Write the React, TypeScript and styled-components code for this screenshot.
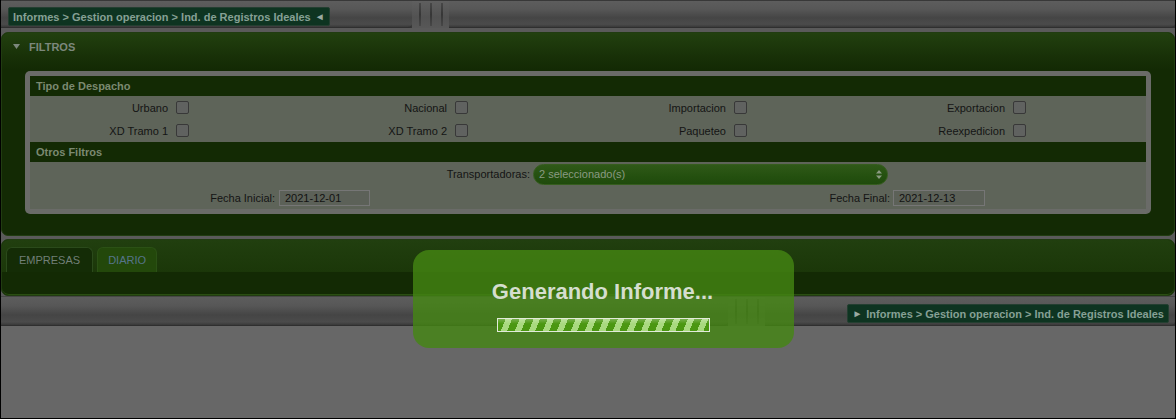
import React from "react";
import styled, { createGlobalStyle } from "styled-components";

const GlobalStyle = createGlobalStyle`
  html, body { margin: 0; padding: 0; }
  body {
    font-family: "Liberation Sans", Arial, sans-serif;
    background: #676767;
  }
  * { box-sizing: border-box; }
`;

const Page = styled.div`
  position: relative;
  height: 419px;
  border: 1px solid #000;
  border-top: none;
  background: #676767;
  overflow: hidden;
`;

/* splitter bars (top and bottom) */
const SplitBar = styled.div<{ $bottom?: boolean }>`
  display: flex;
  height: ${(p) => (p.$bottom ? 30 : 28)}px;
  border-top: 1px solid ${(p) => (p.$bottom ? "#474747" : "#383838")};
  background: linear-gradient(#5d5d5d 0%, #575757 30%, #454545 62%, #4b4b4b 86%, #333 100%);
`;

const Segment = styled.div<{ $width?: number; $align?: "start" | "end" }>`
  display: flex;
  align-items: ${(p) => (p.$align === "end" ? "flex-end" : "flex-start")};
  justify-content: ${(p) => (p.$align === "end" ? "flex-end" : "flex-start")};
  ${(p) => (p.$width ? `width: ${p.$width}px;` : "flex: 1;")}
  padding: ${(p) => (p.$align === "end" ? "0 6px 2px 0" : "6px 0 0 7px")};
  border-radius: 0 4px 4px 0;
  border-bottom: 1px solid #2f2f2f;
`;

const Grip = styled.div`
  display: flex;
  justify-content: center;
  gap: 9px;
  width: 37px;
  padding: 2px 4px;
  background: linear-gradient(#5f5f5f, #525252 60%, #575757);
`;

const GripLine = styled.span`
  width: 2px;
  height: 100%;
  background: linear-gradient(#474747, #363636 50%, #474747);
`;

const Crumb = styled.div`
  display: flex;
  align-items: center;
  gap: 4px;
  height: 19px;
  padding: 0 4px;
  background: #0e3421;
  border: 1px solid #243f31;
  border-radius: 2px;
  color: #86a095;
  font-size: 11px;
  font-weight: bold;
  white-space: nowrap;
`;

const CrumbArrow = styled.span`
  color: #9aaaa2;
  font-size: 10px;
  font-weight: normal;
`;

/* area between the two bars */
const Body = styled.div`
  display: flex;
  flex-direction: column;
  gap: 3px;
  padding-top: 4px;
  background: #5a5a5a;
`;

const Panel = styled.section`
  background: #132a04;
  border: 1px solid #213c11;
  border-radius: 7px;
  overflow: hidden;
`;

const PanelHeader = styled.div`
  display: flex;
  align-items: center;
  gap: 9px;
  height: 37px;
  padding: 0 0 10px 11px;
  background: linear-gradient(#22400f, #172f07 70%, #132a04);
  color: #7c887c;
  font-size: 11px;
  font-weight: bold;
`;

const Frame = styled.div`
  margin: 1px 23px 21px 23px;
  padding: 5px;
  background: #6a6b68;
  border-radius: 5px;
`;

const SectionTitle = styled.div`
  height: 20px;
  padding: 0 6px;
  line-height: 20px;
  background: #132a04;
  color: #7b8971;
  font-size: 11px;
  font-weight: bold;
`;

const Grid = styled.div<{ $cols: string; $h: number }>`
  display: grid;
  grid-template-columns: ${(p) => p.$cols};
  align-items: center;
  height: ${(p) => p.$h}px;
  background: #5e6459;
  color: #141414;
  font-size: 11px;
`;

const CheckCell = styled.label`
  display: grid;
  grid-template-columns: 138px 13px;
  column-gap: 8px;
  align-items: center;
`;

const Label = styled.span<{ $pad?: number }>`
  text-align: right;
  white-space: nowrap;
  padding-right: ${(p) => p.$pad ?? 0}px;
`;

const Check = styled.input.attrs({ type: "checkbox" })`
  appearance: none;
  margin: 0;
  width: 13px;
  height: 13px;
  border: 1px solid #383838;
  border-radius: 2px;
  background: #606260;
`;

const Select = styled.div`
  display: flex;
  align-items: center;
  justify-content: space-between;
  width: 355px;
  height: 21px;
  padding: 0 5px 0 5px;
  border: 1px solid #355d1d;
  border-radius: 11px;
  background: linear-gradient(#2f5918, #24500f 60%, #1f4a0c);
  color: #8a9a82;
  font-size: 11px;
`;

const DateInput = styled.div<{ $w: number }>`
  width: ${(p) => p.$w}px;
  height: 16px;
  padding-left: 5px;
  line-height: 14px;
  border: 1px solid #767676;
  background: #5c6158;
  color: #121212;
  font-size: 11px;
`;

const TabStrip = styled.div`
  display: flex;
  gap: 4px;
  height: 32px;
  padding: 7px 0 0 4px;
  background: linear-gradient(#213f0f, #1b3709);
`;

const Tab = styled.div<{ $active?: boolean }>`
  display: flex;
  align-items: center;
  height: 25px;
  padding: 0 ${(p) => (p.$active ? 12 : 10)}px;
  border: 1px solid ${(p) => (p.$active ? "#2b4a1b" : "#2b5115")};
  border-bottom: none;
  border-radius: 6px 6px 0 0;
  background: ${(p) => (p.$active ? "#142c06" : "#23480b")};
  color: ${(p) => (p.$active ? "#717f78" : "#56748a")};
  font-size: 11px;
`;

const TabBody = styled.div`
  height: 23px;
  border-bottom: 1px solid #2a4e12;
  border-radius: 0 0 7px 7px;
`;

/* loading dialog over the page */
const Dialog = styled.div`
  position: absolute;
  left: 412px;
  top: 250px;
  width: 381px;
  height: 98px;
  display: flex;
  flex-direction: column;
  align-items: center;
  gap: 13px;
  padding-top: 29px;
  border-radius: 16px;
  background: rgba(69, 135, 19, 0.8);
`;

const DialogTitle = styled.div`
  color: #d5dece;
  font-size: 22px;
  font-weight: bold;
  line-height: 26px;
  margin-right: 2px;
`;

const Progress = styled.div`
  width: 213px;
  height: 14px;
  border: 1px solid #e2eada;
  background:
    linear-gradient(rgba(255, 255, 255, 0.25), rgba(255, 255, 255, 0) 40%),
    repeating-linear-gradient(112deg, #4b9712 0 7px, #a9d97f 7px 13px);
`;

function Breadcrumb({ bottom }: { bottom?: boolean }) {
  const text = "Informes > Gestion operacion > Ind. de Registros Ideales";
  return (
    <Crumb>
      {bottom && <CrumbArrow>►</CrumbArrow>}
      {text}
      {!bottom && <CrumbArrow>◄</CrumbArrow>}
    </Crumb>
  );
}

function Arrows() {
  return (
    <svg width="6" height="9" viewBox="0 0 6 9">
      <path d="M3 0 L6 3.5 H0 Z M3 9 L6 5.5 H0 Z" fill="#8a9a82" />
    </svg>
  );
}

const tipos = [
  ["Urbano", "Nacional", "Importacion", "Exportacion"],
  ["XD Tramo 1", "XD Tramo 2", "Paqueteo", "Reexpedicion"],
];

export default function App() {
  return (
    <>
      <GlobalStyle />
      <Page>
        <SplitBar>
          <Segment $width={411}>
            <Breadcrumb />
          </Segment>
          <Grip>
            <GripLine />
            <GripLine />
            <GripLine />
          </Grip>
          <Segment />
        </SplitBar>

        <Body>
          <Panel>
            <PanelHeader>
              <svg width="7" height="5" viewBox="0 0 7 5">
                <path d="M0 0 H7 L3.5 5 Z" fill="#7c887c" />
              </svg>
              FILTROS
            </PanelHeader>
            <Frame>
              <SectionTitle>Tipo de Despacho</SectionTitle>
              {tipos.map((row, i) => (
                <Grid key={i} $cols="repeat(4, 279px)" $h={23}>
                  {row.map((t) => (
                    <CheckCell key={t}>
                      <Label>{t}</Label>
                      <Check />
                    </CheckCell>
                  ))}
                </Grid>
              ))}
              <SectionTitle>Otros Filtros</SectionTitle>
              <Grid $cols="503px 355px" $h={24}>
                <Label $pad={3}>Transportadoras:</Label>
                <Select>
                  <span>2 seleccionado(s)</span>
                  <Arrows />
                </Select>
              </Grid>
              <Grid $cols="249px 310px 304px 1fr" $h={23}>
                <Label $pad={4}>Fecha Inicial:</Label>
                <DateInput $w={91}>2021-12-01</DateInput>
                <Label $pad={3}>Fecha Final:</Label>
                <DateInput $w={92}>2021-12-13</DateInput>
              </Grid>
            </Frame>
          </Panel>

          <Panel>
            <TabStrip>
              <Tab $active>EMPRESAS</Tab>
              <Tab>DIARIO</Tab>
            </TabStrip>
            <TabBody />
          </Panel>
        </Body>

        <SplitBar $bottom>
          <Segment $width={727} />
          <Grip>
            <GripLine />
            <GripLine />
            <GripLine />
          </Grip>
          <Segment $align="end">
            <Breadcrumb bottom />
          </Segment>
        </SplitBar>

        <Dialog>
          <DialogTitle>Generando Informe...</DialogTitle>
          <Progress />
        </Dialog>
      </Page>
    </>
  );
}
